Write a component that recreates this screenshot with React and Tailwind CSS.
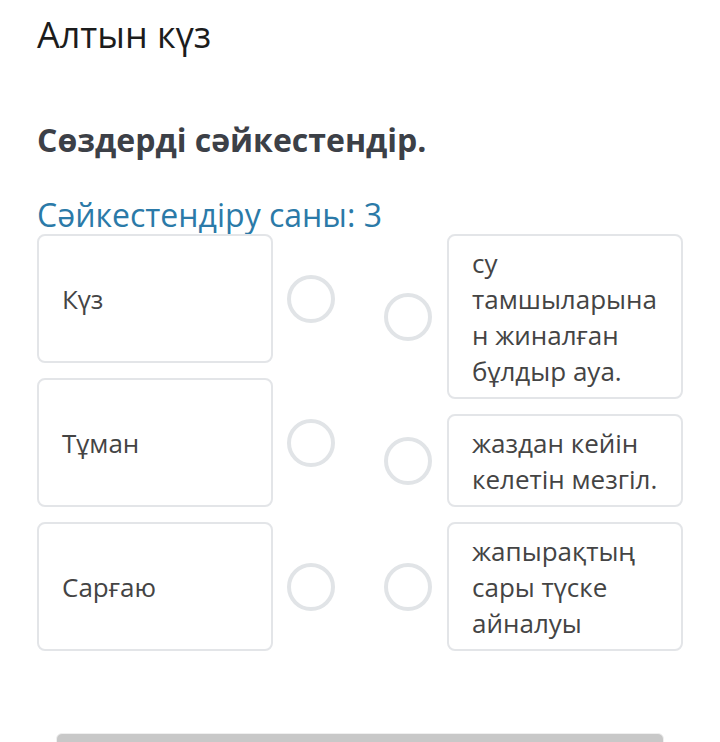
export default function App() {
  const left = ["Күз", "Тұман", "Сарғаю"];
  const right = [
    { text: "су тамшыларынан жиналған бұлдыр ауа.", tall: false },
    { text: "жаздан кейін келетін мезгіл.", tall: false },
    { text: "жапырақтың сары түске айналуы", tall: true },
  ];

  return (
    <div className="min-h-[742px] overflow-hidden bg-white px-[37px] font-['Open_Sans',sans-serif]">
      <h1 className="mt-[17px] text-[36px] leading-[36px] font-normal text-[#1c1c1c]">
        Алтын күз
      </h1>
      <h2 className="mt-[71px] text-[32px] leading-[32px] font-bold text-[#3c4047]">
        Сөздерді сәйкестендір.
      </h2>
      <p className="mt-[43px] text-[32px] leading-[32px] text-[#2b7aa8]">
        Сәйкестендіру саны: 3
      </p>

      <div className="mt-[3px] flex justify-between">
        <div className="flex flex-col gap-[15px]">
          {left.map((t) => (
            <div key={t} className="flex items-center gap-[14px]">
              <div className="flex min-h-[129px] w-[236px] items-center rounded-[8px] border-2 border-[#e3e5e8] px-[23px] text-[26px] leading-[36px] text-[#444444]">
                {t}
              </div>
              <div className="h-[48px] w-[48px] rounded-full border-4 border-[#e1e4e7]" />
            </div>
          ))}
        </div>

        <div className="flex flex-col gap-[15px]">
          {right.map((r) => (
            <div key={r.text} className="flex items-center gap-[15px]">
              <div className="h-[48px] w-[48px] rounded-full border-4 border-[#e1e4e7]" />
              <div
                className={
                  r.tall
                    ? "flex min-h-[129px] w-[236px] items-center break-words rounded-[8px] border-2 border-[#e3e5e8] px-[23px] py-[8.5px] text-[26px] leading-[36px] text-[#444444]"
                    : "w-[236px] break-words rounded-[8px] border-2 border-[#e3e5e8] px-[23px] py-[8.5px] text-[26px] leading-[36px] text-[#444444]"
                }
              >
                <span>{r.text}</span>
              </div>
            </div>
          ))}
        </div>
      </div>

      <div className="mx-[19px] mt-[82px] h-[12px] rounded-t-[6px] border border-[#efefef] bg-[#c8c8c8]" />
    </div>
  );
}
